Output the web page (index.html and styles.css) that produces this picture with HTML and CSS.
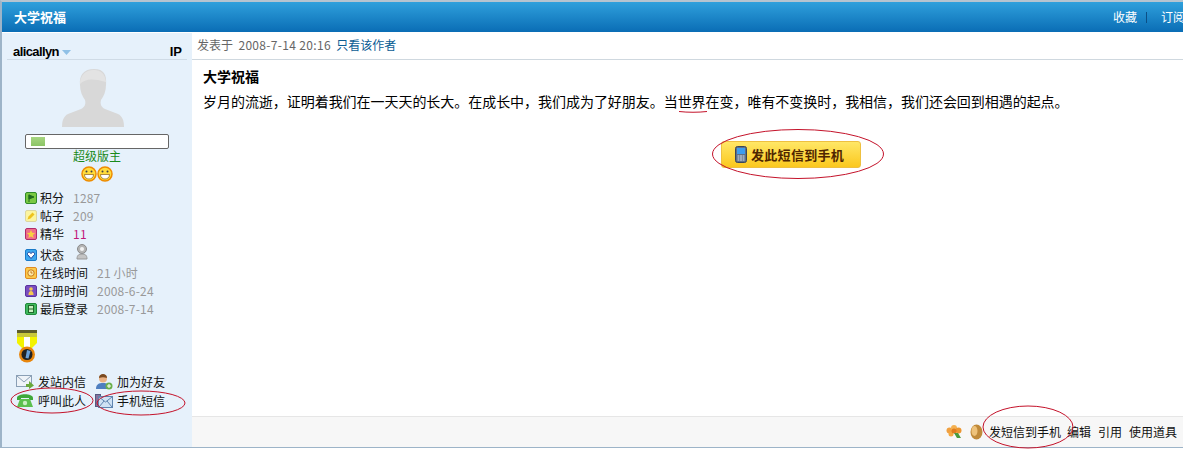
FILE: index.html
```html
<!doctype html>
<html>
<head>
<meta charset="UTF-8">
<title>大学祝福</title>
<link rel="stylesheet" href="styles.css">
</head>
<body>
<div id="box">
	<div class="head">
		<h1>大学祝福</h1>
		<div class="nav"><a>收藏</a><i></i><a>订阅</a></div>
	</div>
	<div class="wrap">
		<div class="side">
			<div class="user">
				<span class="name">alicallyn<svg class="arrow" width="9" height="5" viewBox="0 0 9 5"><path d="M0 0h9L4.500 5z" fill="#8fc0e6"/></svg></span>
				<b>IP</b>
			</div>
			<svg class="avatar" width="62" height="58" viewBox="0 0 62 58">
				<path d="M32 0c-10 0-15 6-14 16 0 6 2 11 5 15 1 4 0 7-4 9L6 45c-4 2-6 6-6 13h62c0-7-2-11-6-13l-13-5c-4-2-5-5-4-9 3-4 5-9 5-15 1-10-2-16-12-16z" fill="#d8d8d8"/>
				<path d="M18 15c5-5 12-6 26-2-1-8-5-12-12-12-9 0-14 6-14 14z" fill="#e3e3e3"/>
			</svg>
			<div class="bar"><span></span></div>
			<div class="rank">超级版主</div>
			<div class="stars">
				<svg width="16" height="16" viewBox="0 0 16 16"><use href="#smile"/></svg>
				<svg width="16" height="16" viewBox="0 0 16 16"><use href="#smile"/></svg>
			</div>
			<ul class="info">
				<li><svg class="ico" viewBox="0 0 12 12"><rect x=".5" y=".5" width="11" height="11" rx="1.500" fill="#7ac943" stroke="#2f8a2a"/><path d="M4 2.500v7.500M4 3l5 2-5 2z" fill="#1f6a1f" stroke="#1f6a1f"/></svg><span>积分</span><span class="val">1287</span></li>
				<li><svg class="ico" viewBox="0 0 12 12"><rect x=".5" y=".5" width="11" height="11" rx="1.500" fill="#fbf4a0" stroke="#dcd6a0"/><path d="M2.500 9.500l1-3 4-4 2 2-4 4z" fill="#eec21e"/></svg><span>帖子</span><span class="val">209</span></li>
				<li><svg class="ico" viewBox="0 0 12 12"><rect x=".5" y=".5" width="11" height="11" rx="1.500" fill="#ee6c8a" stroke="#b02a6a"/><path d="M6 2l1.200 2.800 3 .2-2.300 2 .8 3L6 8.400 3.300 10l.8-3-2.300-2 3-.2z" fill="#f8d040"/></svg><span>精华</span><span class="val hot">11</span></li>
				<li class="state"><svg class="ico" viewBox="0 0 12 12"><rect x=".5" y=".5" width="11" height="11" rx="1.500" fill="#3ea8ee" stroke="#1a7ac8"/><path d="M6 9.500L2.500 5.500C2 3 5 2.500 6 4.500 7 2.500 10 3 9.500 5.500z" fill="#fff" stroke="#1a3f9a"/></svg><span>状态</span>
					<svg class="cam" width="14" height="16" viewBox="0 0 14 16"><circle cx="7" cy="5" r="4.500" fill="#b5b5b5" stroke="#8a8a8a"/><circle cx="7" cy="5" r="2" fill="#f2f2f2"/><path d="M2 15c0-4 2-5 5-5s5 1 5 5z" fill="#c4c4c4" stroke="#999"/></svg>
				</li>
				<li><svg class="ico" viewBox="0 0 12 12"><rect x=".5" y=".5" width="11" height="11" rx="1.500" fill="#fbc94a" stroke="#e08a20"/><circle cx="6" cy="6" r="3.200" fill="#fde9a8" stroke="#c8791a"/><path d="M6 4.200V6h1.500" fill="none" stroke="#c8791a"/></svg><span>在线时间</span><span class="val">21 小时</span></li>
				<li><svg class="ico" viewBox="0 0 12 12"><rect x=".5" y=".5" width="11" height="11" rx="1.500" fill="#7a4fc0" stroke="#5a32a0"/><circle cx="6" cy="4" r="1.800" fill="#f4c850"/><path d="M3.500 10c0-3 1-4 2.500-4s2.500 1 2.500 4z" fill="#f4c850"/></svg><span>注册时间</span><span class="val">2008-6-24</span></li>
				<li><svg class="ico" viewBox="0 0 12 12"><rect x=".5" y=".5" width="11" height="11" rx="1.500" fill="#3fb85e" stroke="#1f8a3a"/><rect x="3.500" y="2.500" width="5" height="7" fill="#c8f0c0" stroke="#1f6a2a"/><path d="M3.500 6h5" stroke="#1f6a2a"/></svg><span>最后登录</span><span class="val">2008-7-14</span></li>
			</ul>
			<svg class="medal" width="20" height="33" viewBox="0 0 20 33">
				<rect width="20" height="3" fill="#5d5d2a"/>
				<rect y="3" width="20" height="4" fill="#c8c83a"/>
				<path d="M0 7h20v6l-6 6H6l-6-6z" fill="#f3f300"/>
				<rect x="7" y="7" width="6" height="11" fill="#fff"/>
				<circle cx="10" cy="24.500" r="8" fill="#e8860c"/>
				<circle cx="10" cy="24.500" r="5.500" fill="#222"/>
				<path d="M10 20l3.500 1-2 7.500-3-.5z" fill="#6aa0d8"/>
			</svg>
			<div class="links">
				<a>
					<svg width="18" height="14" viewBox="0 0 18 14"><rect x=".5" y=".5" width="15" height="11" fill="#eef3f8" stroke="#8a9fb5"/><path d="M1 1l7 6 7-6" fill="none" stroke="#8a9fb5"/><path d="M10 9h3V6l5 4.500-5 3.500v-2h-3z" fill="#69a83c"/></svg>
					发站内信
				</a>
				<a>
					<svg width="18" height="16" viewBox="0 0 18 16"><circle cx="8" cy="4.500" r="4" fill="#eab184"/><path d="M4 4c0-3 2-4 4-4s4 1 4 4c-3-1-5-1-8 0z" fill="#7a4a20"/><path d="M1 15c0-5 3-6 7-6s6 1 6 6z" fill="#4f7fc0"/><circle cx="14" cy="12" r="3.500" fill="#6ab04c"/><path d="M12 12h4M14 10v4" stroke="#fff"/></svg>
					加为好友
				</a>
				<a>
					<svg width="18" height="15" viewBox="0 0 18 15"><path d="M1 5c0-5 16-5 16 0v2h-4V5H5v2H1z" fill="#3fa83a"/><path d="M4 6h10l3 8H1z" fill="#5cc04e"/><circle cx="9" cy="10" r="2.200" fill="#c9efc2"/></svg>
					呼叫此人
				</a>
				<a>
					<svg width="18" height="15" viewBox="0 0 18 15"><rect x=".5" y="1.500" width="5" height="12" fill="#8a6f9a" stroke="#555a80"/><rect x="3.500" y="3.500" width="14" height="11" fill="#cfe2f4" stroke="#5f85b0"/><path d="M4 4l6.500 5L17 4M4 14l5-6M17 14l-5-6" fill="none" stroke="#5f85b0"/></svg>
					手机短信
				</a>
			</div>
		</div>
		<div class="main">
			<div class="meta">发表于&nbsp; <span class="date">2008-7-14 20:16</span>&nbsp; <a>只看该作者</a></div>
			<div class="post">
				<h2>大学祝福</h2>
				<p>岁月的流逝，证明着我们在一天天的长大。在成长中，我们成为了好朋友。当世界在变，唯有不变换时，我相信，我们还会回到相遇的起点。</p>
				<a class="smsbtn">
					<svg width="12" height="17" viewBox="0 0 12 17"><rect x=".5" y=".5" width="11" height="16" rx="2" fill="#5f6f86" stroke="#39465a"/><rect x="2" y="2" width="8" height="6" fill="#3c9cf0"/><path d="M2.500 10h2M5 10h2M7.500 10h2M2.500 12h2M5 12h2M7.500 12h2M2.500 14h2M5 14h2M7.500 14h2" stroke="#dfe8f2"/></svg>
					发此短信到手机
				</a>
			</div>
			<div class="foot">
				<svg class="flower" width="16" height="14" viewBox="0 0 16 14"><circle cx="3.500" cy="5.500" r="3" fill="#f0a040"/><circle cx="8" cy="3" r="3" fill="#f4b050"/><circle cx="12.500" cy="5.500" r="3" fill="#ec9630"/><circle cx="5" cy="9" r="2.500" fill="#f4a840"/><circle cx="8" cy="6" r="2.500" fill="#e07c20"/><path d="M8 8l3 5h4l-3-5z" fill="#4a9a3c"/></svg>
				<svg class="egg" width="13" height="16" viewBox="0 0 13 16"><ellipse cx="6.500" cy="8" rx="6" ry="7.500" fill="#c08a3a"/><ellipse cx="4.500" cy="7" rx="3" ry="5" fill="#eec27a"/></svg>
				<a>发短信到手机</a><a>编辑</a><a>引用</a><a>使用道具</a>
			</div>
		</div>
	</div>
</div>
<!-- 红色批注圈 -->
<svg class="marks" width="1183" height="451" viewBox="0 0 1183 451">
	<defs>
		<g id="smile">
			<circle cx="8" cy="8" r="7" fill="#ffdc3c" stroke="#ee8c00" stroke-width="1.500"/>
			<circle cx="5.500" cy="5.500" r="1" fill="#444"/>
			<circle cx="10.500" cy="5.500" r="1" fill="#444"/>
			<path d="M3.500 8.500h9c0 3-2 4.500-4.500 4.500s-4.500-1.500-4.500-4.500z" fill="#fff" stroke="#7a4a00" stroke-width=".6"/>
		</g>
	</defs>
	<g fill="none" stroke="#c4122a">
		<ellipse cx="798" cy="154" rx="85.500" ry="24.500"/>
		<ellipse cx="52" cy="400.500" rx="41" ry="12.500"/>
		<ellipse cx="141" cy="403" rx="44" ry="12"/>
		<ellipse cx="1028" cy="427" rx="45" ry="21"/>
		<path d="M679 111.500c9 1 19 1 28 0"/>
	</g>
</svg>
</body>
</html>
```

FILE: styles.css
```css
html,body,div,ul,li,h1,h2,p{margin:0;padding:0;}
ul{list-style-type:none;}
i{font-style:normal;}
body{width:1183px;height:451px;overflow:hidden;background:#fff;color:#000;font:12px/18px "Noto Sans CJK SC","Liberation Sans",sans-serif;}

#box{height:448px;box-sizing:border-box;border-left:2px solid #9db4c8;border-bottom:1px solid #9db4c8;border-top:2px solid #b5c4d0;display:flex;flex-direction:column;}

.head{height:30px;flex:none;display:flex;align-items:center;padding-left:12px;color:#fff;background:linear-gradient(#2fa0dc,#0a6db5);}
.head h1{font-size:13px;font-weight:700;}
.nav{margin-left:auto;width:70px;display:flex;align-items:center;white-space:nowrap;overflow:hidden;flex:none;}
.nav a{flex:none;}
.nav i{flex:none;width:1px;height:11px;margin:0 14px 0 9px;background:#0b4f86;}

.wrap{flex:1;display:flex;min-height:0;margin-top:1px;}

.side{width:190px;flex:none;background:#e6f1fb;display:flex;flex-direction:column;align-items:stretch;padding:0 5px;box-sizing:border-box;}
.user{height:27px;flex:none;box-sizing:border-box;display:flex;justify-content:space-between;align-items:flex-end;padding:0 5px 0 6px;border-bottom:1px solid #cfdbe6;font-weight:700;line-height:14px;}
.user b{font-family:"Liberation Sans",sans-serif;font-size:13px;}
.name{font-family:"Liberation Sans",sans-serif;font-size:13px;letter-spacing:-.6px;}
.arrow{margin-left:3px;vertical-align:1px;}
.avatar{display:block;margin:9px 0 0 55px;flex:none;}
.bar{margin:7px 18px 0;height:15px;flex:none;box-sizing:border-box;border:1px solid #666;border-radius:2px;background:#fff;padding:2px 5px;}
.bar span{display:block;width:14px;height:9px;background:linear-gradient(#a6d580,#8cc466);}
.rank{text-align:center;color:#1a8a1a;line-height:13px;}
.stars{display:flex;justify-content:center;height:16px;margin-top:4px;}
.stars svg{display:block;}

.info{margin:7px 0 0 18px;}
.info li{height:18px;display:flex;align-items:center;gap:3px;color:#111;}
.info li.state{margin-top:3px;}
.info .val{margin-left:6px;color:#999;letter-spacing:.2px;}
.info .hot{color:#c2187a;}
.cam{margin:-6px 0 0 8px;}
.ico{display:block;width:12px;height:12px;flex:none;}

.medal{display:block;margin:12px 0 0 10px;flex:none;}
.links{display:grid;grid-template-columns:79px 80px;grid-auto-rows:19px;margin:9px 0 0 9px;}
.links a{display:flex;align-items:center;gap:4px;color:#111;}
.links svg{flex:none;}

.main{flex:1;display:flex;flex-direction:column;min-width:0;}
.meta{height:27px;line-height:24px;box-sizing:border-box;padding-left:5px;border-bottom:1px solid #cfd8df;color:#666;flex:none;}
.meta a{color:#0b5d94;}
.date{letter-spacing:.33px;}
.post{flex:1;padding:7px 0 0 11px;}
.post h2{font-size:14px;line-height:18px;font-weight:700;}
.post p{font-size:14px;line-height:20px;margin-top:6px;white-space:nowrap;letter-spacing:-.04px;}
.smsbtn{width:140px;height:27px;box-sizing:border-box;margin:30px 0 0 518px;display:flex;align-items:center;gap:4px;padding-left:13px;border:1px solid #eec040;border-radius:3px;background:linear-gradient(#ffe766,#fbc81e);color:#4f2500;font-size:13px;letter-spacing:.3px;font-weight:700;}
.foot{height:31px;flex:none;box-sizing:border-box;border-top:1px solid #e6e6e6;background:#f7f7f7;display:flex;align-items:center;justify-content:flex-end;padding-right:6px;color:#111;}
.foot a{margin-left:7px;}
.foot .egg{margin-left:8px;}
.foot .egg + a{margin-left:6px;}
.foot .egg + a + a{margin-left:6px;}

.marks{position:absolute;left:0;top:0;pointer-events:none;}
```
